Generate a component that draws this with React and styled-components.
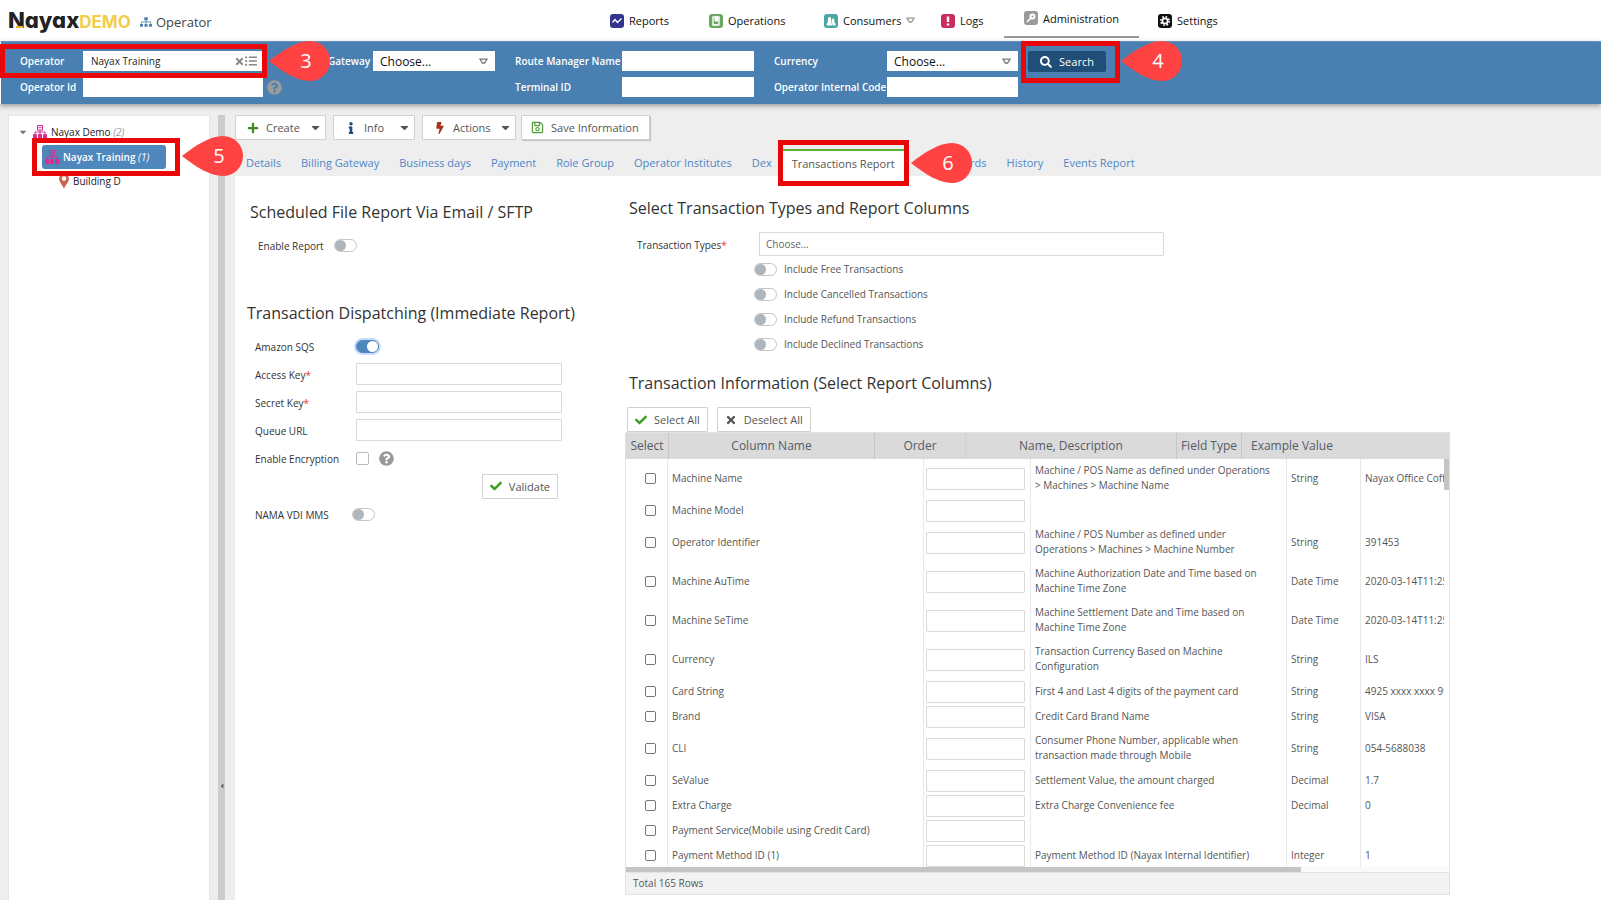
import React, { useState } from "react";
import styled, { createGlobalStyle } from "styled-components";
import {
  FaBolt,
  FaCaretDown,
  FaCaretLeft,
  FaCheck,
  FaInfo,
  FaListUl,
  FaPlus,
  FaQuestionCircle,
  FaRegSave,
  FaSearch,
  FaSitemap,
  FaTimes,
} from "react-icons/fa";

const tabs = [
  "Details",
  "Billing Gateway",
  "Business days",
  "Payment",
  "Role Group",
  "Operator Institutes",
  "Dex",
  "Transactions Report",
  "Prepaid Cards",
  "History",
  "Events Report",
];

const includes = [
  "Include Free Transactions",
  "Include Cancelled Transactions",
  "Include Refund Transactions",
  "Include Declined Transactions",
];

const columns = [
  ["Machine Name", "Machine / POS Name as defined under Operations > Machines > Machine Name", "String", "Nayax Office Coffee"],
  ["Machine Model", "", "", ""],
  ["Operator Identifier", "Machine / POS Number as defined under Operations > Machines > Machine Number", "String", "391453"],
  ["Machine AuTime", "Machine Authorization Date and Time based on Machine Time Zone", "Date Time", "2020-03-14T11:25:00"],
  ["Machine SeTime", "Machine Settlement Date and Time based on Machine Time Zone", "Date Time", "2020-03-14T11:25:00"],
  ["Currency", "Transaction Currency Based on Machine Configuration", "String", "ILS"],
  ["Card String", "First 4 and Last 4 digits of the payment card", "String", "4925 xxxx xxxx 9999"],
  ["Brand", "Credit Card Brand Name", "String", "VISA"],
  ["CLI", "Consumer Phone Number, applicable when transaction made through Mobile", "String", "054-5688038"],
  ["SeValue", "Settlement Value, the amount charged", "Decimal", "1.7"],
  ["Extra Charge", "Extra Charge Convenience fee", "Decimal", "0"],
  ["Payment Service(Mobile using Credit Card)", "", "", ""],
  ["Payment Method ID (1)", "Payment Method ID (Nayax Internal Identifier)", "Integer", "1"],
];

const DownTriangle = () => (
  <svg width="9" height="7" viewBox="0 0 9 7" fill="none" stroke="currentColor" strokeWidth="1.3">
    <path d="M1 1.2h7L5.6 5H3.4z" />
  </svg>
);

const OrgIcon = () => (
  <svg width="14" height="14" viewBox="0 0 14 14" fill="none" stroke="#d6308f">
    <rect x="4.5" y="0.5" width="5" height="4.5" />
    <path d="M5.5 2.7h3M7 5v4M2 9V7h10v2" />
    <path d="M0.5 9.5h3v4h-3zM5.5 9.5h3v4h-3zM10.5 9.5h3v4h-3z" fill="#d6308f" />
  </svg>
);

const MapPin = () => (
  <svg width="10" height="15" viewBox="0 0 10 15">
    <path d="M5 15C4 11 0 8.500 0 4.800A5 4.800 0 0 1 10 4.800C10 8.500 6 11 5 15z" fill="#c9634a" />
    <circle cx="5" cy="4.600" r="2.300" fill="#fff" />
  </svg>
);

const navArt = {
  Reports: <path d="M2.500 8.500l2.500-3 2.500 3 4-4" stroke="#fff" strokeWidth="1.3" fill="none" />,
  Operations: (
    <g>
      <rect x="4" y="3" width="6" height="8" fill="none" stroke="#fff" strokeWidth="1.400" />
      <path d="M6 3h3v4H6zM4 11h4" fill="#fff" stroke="#fff" strokeWidth="1" />
    </g>
  ),
  Consumers: (
    <g fill="#fff">
      <path d="M2.500 11.500C2.500 9 4 8.500 4 6.500 3.500 4 4.500 3 5.600 3S7.500 4 7 6.500c0 2 1 2.500 1 5z" />
      <path d="M8.500 11.500c0-2.500-.8-3-1-4.500.2-2 .8-2.500 1.500-2.500s1.800.8 1.300 2.700c0 1.500 1.400 2 1.400 4.300z" />
    </g>
  ),
  Logs: <path d="M7 2.500v5.500M7 9.500v2" stroke="#fff" strokeWidth="2.400" fill="none" />,
  Administration: (
    <g stroke="#fff" fill="none">
      <circle cx="8.500" cy="5.500" r="2" strokeWidth="2" />
      <path d="M7 7l-4 4" strokeWidth="1.600" />
    </g>
  ),
  Settings: (
    <g stroke="#fff" fill="none">
      <circle cx="7" cy="7" r="2.700" strokeWidth="1.800" />
      <circle cx="7" cy="7" r="4.300" strokeWidth="1.500" strokeDasharray="1.700 1.677" />
    </g>
  ),
};

const NavIcon = ({ name, color }) => (
  <svg width="14" height="14" viewBox="0 0 14 14">
    <rect width="14" height="14" rx="3" fill={color} />
    {navArt[name]}
  </svg>
);

function Pin({ number, x, y }) {
  return (
    <PinBox $x={x} $y={y}>
      <svg width="61" height="40" viewBox="0 0 61 40">
        <path d="M0 20C14 9 28 0 41 0A20 20 0 0 1 41 40C28 40 14 31 0 20z" fill="#ff4343" />
      </svg>
      <PinNumber>{number}</PinNumber>
    </PinBox>
  );
}

function Header() {
  return (
    <TopBar>
      <Logo>
        Nayax<LogoDemo>DEMO</LogoDemo>
      </Logo>
      <PageName>
        <FaSitemap size={12} color="#4a7fb1" />
        Operator
      </PageName>
      <Nav>
        <NavLink href="#reports" $width={99}><NavIcon name="Reports" color="#32348f" />Reports</NavLink>
        <NavLink href="#operations" $width={115}><NavIcon name="Operations" color="#6aa860" />Operations</NavLink>
        <NavLink href="#consumers" $width={117}>
          <NavIcon name="Consumers" color="#4ba6a6" />Consumers
          <NavArrow><DownTriangle /></NavArrow>
        </NavLink>
        <NavLink href="#logs" $width={63}><NavIcon name="Logs" color="#c92e5c" />Logs</NavLink>
        <NavLink href="#administration" $width={135} $active><NavIcon name="Administration" color="#9a9a9c" />Administration</NavLink>
        <NavLink href="#settings" $width={80}><NavIcon name="Settings" color="#111" />Settings</NavLink>
      </Nav>
    </TopBar>
  );
}

function Choose({ id }) {
  return (
    <SelectWrap>
      <SearchSelect id={id}>
        <option>Choose...</option>
      </SearchSelect>
      <SelectArrow><DownTriangle /></SelectArrow>
    </SelectWrap>
  );
}

function SearchBar() {
  return (
    <Filters>
      <FieldGroup $cols="63px 180px 15px">
        <label htmlFor="operator">Operator</label>
        <OperatorBox>
          <OperatorInput id="operator" defaultValue="Nayax Training" />
          <FaTimes size={11} />
          <FaListUl size={12} />
        </OperatorBox>
        <span />
        <label htmlFor="operatorId">Operator Id</label>
        <SearchInput id="operatorId" />
        <FaQuestionCircle size={15} color="#9b9b9b" />
      </FieldGroup>
      <FieldGroup $cols="45px 122px" $before={30}>
        <label htmlFor="gateway">Gateway</label>
        <Choose id="gateway" />
      </FieldGroup>
      <FieldGroup $cols="107px 132px">
        <label htmlFor="route">Route Manager Name</label>
        <SearchInput id="route" />
        <label htmlFor="terminal">Terminal ID</label>
        <SearchInput id="terminal" />
      </FieldGroup>
      <FieldGroup $cols="113px 131px">
        <label htmlFor="currency">Currency</label>
        <Choose id="currency" />
        <label htmlFor="code">Operator Internal Code</label>
        <SearchInput id="code" />
      </FieldGroup>
      <SearchButton>
        <FaSearch size={12} />
        Search
      </SearchButton>
    </Filters>
  );
}

function Tree() {
  return (
    <TreePanel>
      <TreeItem>
        <FaCaretDown size={10} color="#777" />
        <OrgIcon />
        <span>Nayax Demo <Count>(2)</Count></span>
      </TreeItem>
      <TreeSelected>
        <OrgIcon />
        <span>Nayax Training <Count $light>(1)</Count></span>
      </TreeSelected>
      <TreeLeaf>
        <MapPin />
        Building D
      </TreeLeaf>
    </TreePanel>
  );
}

function LeftForm() {
  const [sqs, setSqs] = useState(true);
  return (
    <LeftColumn>
      <Heading>Scheduled File Report Via Email / SFTP</Heading>
      <FormRow $indent={8} $label={76}>
        <label htmlFor="enable">Enable Report</label>
        <Toggle id="enable" type="checkbox" />
      </FormRow>
      <SecondHeading>Transaction Dispatching (Immediate Report)</SecondHeading>
      <FormRow>
        <label htmlFor="sqs">Amazon SQS</label>
        <Toggle id="sqs" type="checkbox" checked={sqs} onChange={() => setSqs(!sqs)} />
      </FormRow>
      <FormRow>
        <label htmlFor="access">Access Key<Star>*</Star></label>
        <TextInput id="access" />
      </FormRow>
      <FormRow>
        <label htmlFor="secret">Secret Key<Star>*</Star></label>
        <TextInput id="secret" />
      </FormRow>
      <FormRow>
        <label htmlFor="queue">Queue URL</label>
        <TextInput id="queue" />
      </FormRow>
      <FormRow>
        <label htmlFor="encryption">Enable Encryption</label>
        <Check id="encryption" type="checkbox" $light />
        <Help><FaQuestionCircle size={15} /></Help>
      </FormRow>
      <ValidateRow>
        <Button><FaCheck size={12} color="#3f9a25" />Validate</Button>
      </ValidateRow>
      <FormRow $label={97}>
        <label htmlFor="nama">NAMA VDI MMS</label>
        <Toggle id="nama" type="checkbox" />
      </FormRow>
    </LeftColumn>
  );
}

function ReportTable() {
  return (
    <TableBox>
      <Table>
        <thead>
          <HeadRow>
            <th>Select</th>
            <th>Column Name</th>
            <th>Order</th>
            <th>Name, Description</th>
            <th>Field Type</th>
            <th>Example Value</th>
          </HeadRow>
        </thead>
        <Body>
          {columns.map(([name, description, type, example]) => (
            <BodyRow key={name}>
              <td><Check type="checkbox" aria-label={name} /></td>
              <td>{name}</td>
              <td><OrderInput aria-label={name + " order"} /></td>
              <td>{description}</td>
              <td>{type}</td>
              <td>{example}</td>
            </BodyRow>
          ))}
        </Body>
      </Table>
      <VerticalThumb />
      <HorizontalTrack><HorizontalThumb /></HorizontalTrack>
      <TableFooter>Total 165 Rows</TableFooter>
    </TableBox>
  );
}

function RightForm() {
  return (
    <RightColumn>
      <Heading $flush>Select Transaction Types and Report Columns</Heading>
      <TypesRow>
        <label htmlFor="types">Transaction Types<Star>*</Star></label>
        <TypesSelect id="types">
          <option>Choose...</option>
        </TypesSelect>
      </TypesRow>
      <IncludeList>
        {includes.map((text) => (
          <IncludeRow key={text}>
            <Toggle type="checkbox" />
            {text}
          </IncludeRow>
        ))}
      </IncludeList>
      <Heading $flush>Transaction Information (Select Report Columns)</Heading>
      <SelectButtons>
        <Button><FaCheck size={12} color="#3f9a25" />Select All</Button>
        <Button><FaTimes size={12} color="#555" />Deselect All</Button>
      </SelectButtons>
      <ReportTable />
    </RightColumn>
  );
}

function App() {
  return (
    <Page>
      <GlobalStyle />
      <Header />
      <SearchBar />
      <Main>
        <Tree />
        <Splitter><FaCaretLeft size={8} /></Splitter>
        <Content>
          <Toolbar>
            <Button $width={91}><FaPlus size={12} color="#3f8a25" />Create<Caret><FaCaretDown size={13} /></Caret></Button>
            <Button $width={82}><FaInfo size={12} color="#1d4b78" />Info<Caret><FaCaretDown size={13} /></Caret></Button>
            <Button $width={94}><FaBolt size={12} color="#a5331b" />Actions<Caret><FaCaretDown size={13} /></Caret></Button>
            <SaveButton><FaRegSave size={13} color="#4f9e3a" />Save Information</SaveButton>
          </Toolbar>
          <Tabs>
            {tabs.map((tab) => (
              <Tab key={tab} href="#tab" $active={tab === "Transactions Report"}>{tab}</Tab>
            ))}
          </Tabs>
          <Sheet>
            <LeftForm />
            <RightForm />
          </Sheet>
        </Content>
      </Main>

      <Marker $x={0} $y={44} $w={267} $h={34} />
      <Marker $x={1021} $y={41} $w={99} $h={42} />
      <Marker $x={32} $y={138} $w={148} $h={38} />
      <Marker $x={778} $y={140} $w={131} $h={46} />
      <Pin number={3} x={269} y={41} />
      <Pin number={4} x={1121} y={41} />
      <Pin number={5} x={182} y={136} />
      <Pin number={6} x={911} y={143} />
    </Page>
  );
}

export default App

const GlobalStyle = createGlobalStyle`
  * { box-sizing: border-box; }
  body {
    margin: 0;
    background: #fff;
    color: #333;
    font-family: "Open Sans", "Noto Sans", sans-serif;
    font-size: 10px;
    line-height: 15px;
  }
  button, input, select { font: inherit; color: inherit; margin: 0; }
  a { text-decoration: none; color: inherit; }
  svg { flex: none; }
`

const Page = styled.div`
  position: relative;
  display: flex;
  flex-direction: column;
  height: 100vh;
  min-height: 900px;
  overflow: hidden;
`

const TopBar = styled.header`
  display: flex;
  align-items: center;
  height: 41px;
  padding-left: 8px;
`

const Logo = styled.div`
  position: relative;
  width: 132px;
  color: #222;
  font-family: Inter, "Open Sans", sans-serif;
  font-feature-settings: "cv11";
  font-size: 22px;
  font-weight: 800;
  line-height: 40px;
  white-space: nowrap;
  &::after {
    content: "";
    position: absolute;
    left: 8px;
    top: 26px;
    width: 7px;
    height: 2px;
    background: #f0b429;
  }
`

const LogoDemo = styled.span`
  color: #f3cd4a;
  font-size: 17px;
  font-weight: 700;
`

const PageName = styled.div`
  display: flex;
  align-items: center;
  gap: 4px;
  width: 460px;
  padding-top: 3px;
  color: #444;
  font-size: 13px;
  line-height: 18px;
`

const Nav = styled.nav`
  display: flex;
  align-items: flex-start;
  height: 41px;
  padding-left: 10px;
`

const NavLink = styled.a`
  display: flex;
  align-items: center;
  gap: 5px;
  width: ${(p) => p.$width}px;
  height: ${(p) => (p.$active ? 38 : 41)}px;
  padding-left: ${(p) => (p.$active ? 20 : 0)}px;
  margin-right: ${(p) => (p.$active ? 19 : 0)}px;
  border-bottom: ${(p) => (p.$active ? "2px solid #999" : "none")};
  color: #111;
  font-size: 11px;
  white-space: nowrap;
`

const NavArrow = styled.span`
  display: flex;
  color: #999;
`

const Filters = styled.form`
  position: relative;
  display: flex;
  align-items: flex-start;
  gap: 20px;
  height: 63px;
  padding: 9px 0 0 19px;
  background: #4a7fb1;
  border-top: 1px solid #6795bf;
  border-left: 1px solid #fff;
  box-shadow: 0 2px 5px rgba(0, 0, 0, 0.35);
  color: #fff;
`

const FieldGroup = styled.div`
  display: grid;
  grid-template-columns: ${(p) => p.$cols};
  grid-auto-rows: 20px;
  row-gap: 6px;
  align-items: center;
  margin-left: ${(p) => p.$before || 0}px;
  white-space: nowrap;
  label { font-weight: 600; }
  > svg { margin-left: 4px; }
`

const SearchInput = styled.input`
  width: 100%;
  height: 20px;
  padding: 0 8px;
  border: 0;
  background: #fff;
  color: #222;
`

const OperatorBox = styled.div`
  display: flex;
  align-items: center;
  height: 20px;
  padding-right: 6px;
  background: #fff;
  color: #888;
`

const OperatorInput = styled(SearchInput)`
  flex: 1;
  min-width: 0;
`

const SelectWrap = styled.div`
  position: relative;
`

const SearchSelect = styled.select`
  appearance: none;
  width: 100%;
  height: 20px;
  padding: 0 7px;
  border: 0;
  border-radius: 0;
  background: #fff;
  color: #111;
  font-size: 12px;
`

const SelectArrow = styled.span`
  position: absolute;
  right: 7px;
  top: 7px;
  display: flex;
  color: #777;
`

const SearchButton = styled.button`
  display: flex;
  align-items: center;
  justify-content: center;
  gap: 7px;
  width: 78px;
  height: 21px;
  margin-left: -10px;
  border: 0;
  border-radius: 2px;
  background: #1f4e79;
  color: #fff;
  font-size: 11px;
`

const Main = styled.main`
  flex: 1;
  display: flex;
  min-height: 0;
  padding: 11px 0 0 8px;
  background: #eee;
`

const TreePanel = styled.aside`
  width: 202px;
  padding: 7px 0 0 9px;
  background: #fff;
  border: 1px solid #e6e6e6;
  border-bottom: 0;
  color: #222;
`

const TreeItem = styled.div`
  display: flex;
  align-items: center;
  gap: 4px;
  height: 18px;
  font-size: 10px;
  svg + svg { margin-left: 1px; }
`

const TreeSelected = styled(TreeItem)`
  width: 124px;
  height: 24px;
  margin: 4px 0 0 24px;
  padding-left: 3px;
  border-radius: 3px;
  background: #4f87bd;
  color: #fff;
  font-weight: 600;
`

const TreeLeaf = styled(TreeItem)`
  height: 24px;
  margin-left: 41px;
`

const Count = styled.i`
  color: ${(p) => (p.$light ? "#fff" : "#999")};
  font-weight: 400;
`

const Splitter = styled.div`
  display: flex;
  align-items: center;
  justify-content: center;
  width: 7px;
  margin: 0 10px 0 8px;
  background: #ccc;
  color: #666;
  svg { margin-top: 556px; }
`

const Content = styled.section`
  flex: 1;
  display: flex;
  flex-direction: column;
  min-width: 0;
`

const Toolbar = styled.div`
  display: flex;
  gap: 7px;
`

const Button = styled.button`
  display: flex;
  align-items: center;
  gap: 7px;
  width: ${(p) => (p.$width ? p.$width + "px" : "auto")};
  height: 25px;
  padding: 0 7px;
  padding-left: ${(p) => (p.$width ? 11 : 7)}px;
  padding-right: ${(p) => (p.$width ? 3 : 7)}px;
  border: 1px solid #d0d0d0;
  border-radius: 1px;
  background: #fff;
  color: #555;
  font-size: 11px;
  white-space: nowrap;
`

const SaveButton = styled(Button)`
  padding: 0 10px 0 9px;
  margin-left: -2px;
  box-shadow: 1px 1px 1px #b9c4b3;
`

const Caret = styled.span`
  display: flex;
  margin-left: auto;
`

const Tabs = styled.nav`
  display: flex;
  height: 36px;
  padding: 9px 0 0 1px;
`

const Tab = styled.a`
  padding: ${(p) => (p.$active ? "5px 10px 0" : "4px 10px 0")};
  border-top: 2px solid ${(p) => (p.$active ? "#56b233" : "transparent")};
  background: ${(p) => (p.$active ? "#fff" : "transparent")};
  color: ${(p) => (p.$active ? "#555" : "#4f87c7")};
  font-size: 11px;
  white-space: nowrap;
`

const Sheet = styled.div`
  flex: 1;
  display: flex;
  align-items: flex-start;
  background: #fff;
`

const LeftColumn = styled.div`
  width: 390px;
  padding: 24px 0 0 15px;
`

const RightColumn = styled.div`
  flex: 1;
  min-width: 0;
  padding: 20px 0 0;
`

const Heading = styled.h2`
  margin: 0;
  margin-left: ${(p) => (p.$flush ? 4 : 0)}px;
  color: #333;
  font-size: 16px;
  font-weight: 400;
  line-height: 24px;
`

const SecondHeading = styled(Heading)`
  margin: 42px 0 0 -3px;
`

const FormRow = styled.div`
  display: flex;
  align-items: center;
  height: 28px;
  margin-left: ${(p) => (p.$indent || 5)}px;
  label {
    width: ${(p) => p.$label || 101}px;
    padding-top: 2px;
  }
  h2 + & { margin-top: 7px; }
`

const ValidateRow = styled(FormRow)`
  justify-content: flex-end;
  margin-right: 67px;
`

const Star = styled.span`
  color: #e33;
`

const TextInput = styled.input`
  width: 206px;
  height: 22px;
  padding: 0 6px;
  border: 1px solid #d9d9d9;
  border-radius: 1px;
  background: #fff;
`

const OrderInput = styled(TextInput)`
  width: 99px;
`

const Toggle = styled.input`
  appearance: none;
  position: relative;
  flex: none;
  width: 23px;
  height: 13px;
  border: 1px solid #c4c4c4;
  border-radius: 7px;
  background: #fff;
  &::before {
    content: "";
    position: absolute;
    left: 0;
    top: 0;
    width: 11px;
    height: 11px;
    border-radius: 50%;
    background: #adb5bd;
  }
  &:checked {
    border-color: #4f87bd;
    background: #4f87bd;
    box-shadow: 0 0 0 2px #c7dcfb;
  }
  &:checked::before {
    left: 10px;
    background: #fff;
  }
`

const Check = styled.input`
  appearance: none;
  flex: none;
  width: ${(p) => (p.$light ? 13 : 11)}px;
  height: ${(p) => (p.$light ? 13 : 11)}px;
  border: 1px solid ${(p) => (p.$light ? "#bbb" : "#767676")};
  border-radius: 2px;
  background: #fff;
`

const Help = styled.span`
  display: flex;
  margin-left: 10px;
  color: #999;
`

const TypesRow = styled.div`
  display: flex;
  align-items: center;
  height: 24px;
  margin: 12px 0 1px 12px;
  label { width: 122px; padding-top: 2px; }
`

const TypesSelect = styled.select`
  appearance: none;
  width: 405px;
  height: 24px;
  padding: 0 6px;
  border: 1px solid #d9d9d9;
  border-radius: 1px;
  background: #fff;
  color: #666;
`

const IncludeList = styled.div`
  margin: 0 0 14px 129px;
`

const IncludeRow = styled.label`
  display: flex;
  align-items: center;
  gap: 7px;
  height: 25px;
  color: #555;
`

const SelectButtons = styled.div`
  display: flex;
  gap: 9px;
  margin: 12px 0 0 2px;
`

const TableBox = styled.div`
  position: relative;
  max-width: 825px;
  border: 1px solid #e2e2e2;
  color: #555;
`

const Table = styled.table`
  display: block;
  border-collapse: collapse;
  thead { display: block; }
`

const HeadRow = styled.tr`
  display: grid;
  grid-template-columns: 43px 206px 91px 211px 65px 1fr;
  height: 26px;
  background: #dadada;
  th {
    padding: 0;
    border-right: 1px solid #c6c6c6;
    color: #555a66;
    font-size: 12px;
    font-weight: 400;
    line-height: 26px;
  }
  th:nth-child(3) { border-color: #d2d2d2; }
  th:last-child {
    padding-left: 9px;
    border: 0;
    text-align: left;
  }
`

const Body = styled.tbody`
  display: block;
  height: 408px;
  margin-right: 5px;
  overflow: hidden;
`

const BodyRow = styled.tr`
  display: grid;
  grid-template-columns: 42px 256px 107px 256px 74px 1fr;
  td {
    display: flex;
    align-items: center;
    min-width: 0;
    min-height: 25px;
    padding: 0 4px;
    border-right: 1px solid #e8e8e8;
    overflow: hidden;
  }
  td:nth-child(1) { padding-left: 19px; }
  td:nth-child(3) { padding: 0 2px; }
  td:nth-child(4) { padding: 4px 10px 5px 4px; }
  td:last-child {
    border: 0;
    white-space: nowrap;
  }
`

const VerticalThumb = styled.div`
  position: absolute;
  right: 0;
  top: 26px;
  width: 5px;
  height: 31px;
  background: #c4c4c4;
`

const HorizontalTrack = styled.div`
  height: 5px;
  background: #fafafa;
`

const HorizontalThumb = styled.div`
  width: 82%;
  height: 5px;
  background: #c4c4c4;
`

const TableFooter = styled.div`
  height: 22px;
  padding: 3px 7px;
  border-top: 1px solid #e2e2e2;
  background: #f2f2f2;
`

// numbered walkthrough callouts, drawn over the page
const Marker = styled.div`
  position: absolute;
  left: ${(p) => p.$x}px;
  top: ${(p) => p.$y}px;
  width: ${(p) => p.$w}px;
  height: ${(p) => p.$h}px;
  border: 5px solid #ea0707;
  pointer-events: none;
`

const PinBox = styled.div`
  position: absolute;
  left: ${(p) => p.$x}px;
  top: ${(p) => p.$y}px;
  width: 61px;
  height: 40px;
`

const PinNumber = styled.span`
  position: absolute;
  inset: 0 0 0 13px;
  color: #fff;
  font-size: 20px;
  line-height: 40px;
  text-align: center;
`
